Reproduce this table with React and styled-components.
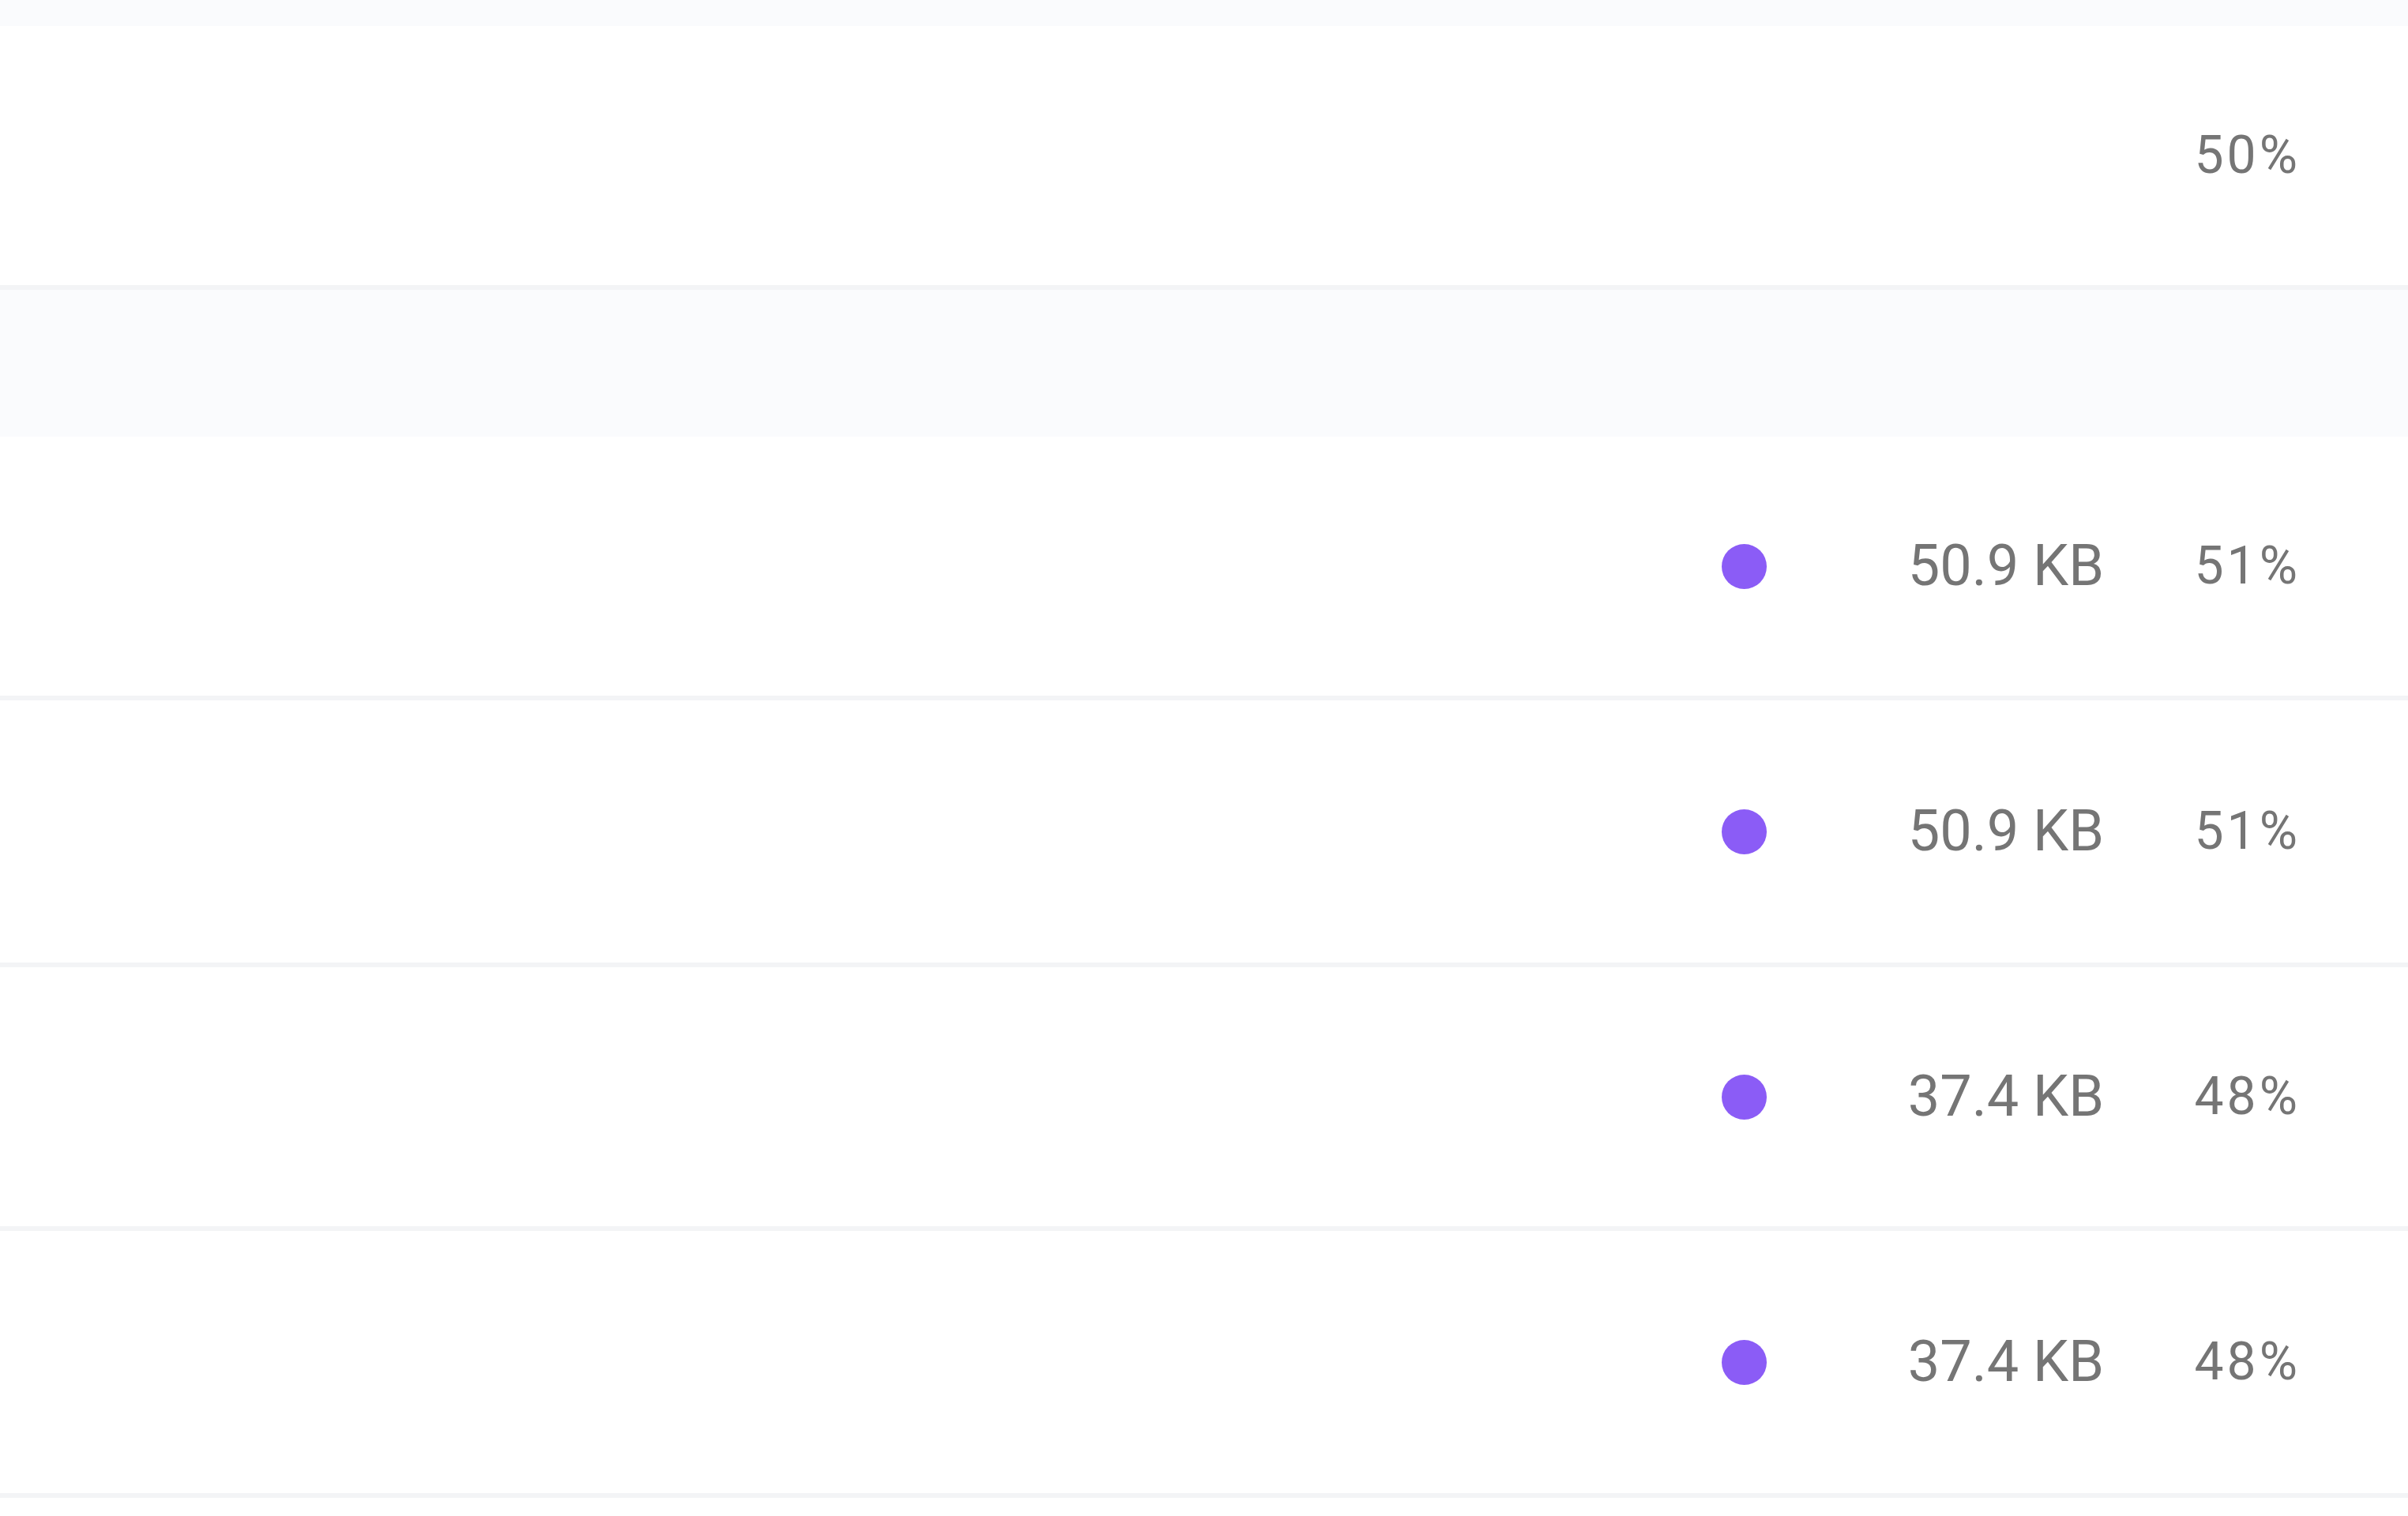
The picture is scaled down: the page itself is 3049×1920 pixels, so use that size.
import React from 'react'
import styled, { createGlobalStyle } from 'styled-components'

const GlobalStyle = createGlobalStyle`
    html, body {
        margin: 0;
        padding: 0;
        background: #ffffff;
    }
    body {
        font-family: Roboto, Inter, "Liberation Sans", sans-serif;
        color: #757575;
    }
`;

const Table = styled.div`
    display: flex;
    flex-direction: column;
    width: 100%;
`;

const GroupBand = styled.div`
    height: ${({ $h }) => $h}px;
    background-color: #fafbfd;
`;

const Row = styled.div`
    display: flex;
    align-items: center;
    justify-content: flex-end;
    height: ${({ $h }) => $h}px;
    padding-right: 136px;
    border-bottom: 6px solid #f3f4f6;
    background-color: #ffffff;
`;

const StatusCell = styled.div`
    width: 57px;
    display: flex;
    justify-content: center;
`;

const Dot = styled.span`
    width: 57px;
    height: 57px;
    border-radius: 50%;
    background-color: #8b5cf6;
`;

const SizeCell = styled.div`
    width: 427px;
    text-align: right;
    font-size: 72px;
    line-height: 1;
    white-space: nowrap;
`;

const PercentCell = styled.div`
    width: 249px;
    text-align: right;
    font-size: 66px;
    line-height: 1;
    font-variant-numeric: tabular-nums;
    letter-spacing: 4px;
`;

const rows = [
    { id: 'b0', band: true, h: 33 },
    { id: 'r0', h: 328, pct: '50%' },
    { id: 'b1', band: true, h: 186 },
    { id: 'r1', h: 328, dot: true, size: '50.9 KB', pct: '51%' },
    { id: 'r2', h: 332, dot: true, size: '50.9 KB', pct: '51%' },
    { id: 'r3', h: 328, dot: true, size: '37.4 KB', pct: '48%' },
    { id: 'r4', h: 332, dot: true, size: '37.4 KB', pct: '48%' },
];

const App = () => {
  return (
    <>
        <GlobalStyle />
        <Table>
            {
                rows.map(({ id, band, h, dot, size, pct }) => (
                    band
                        ? <GroupBand key={id} $h={h} />
                        : (
                            <Row key={id} $h={h}>
                                <StatusCell>{dot && <Dot />}</StatusCell>
                                <SizeCell>{size}</SizeCell>
                                <PercentCell>{pct}</PercentCell>
                            </Row>
                        )
                ))
            }
        </Table>
    </>
  )
}

export default App
